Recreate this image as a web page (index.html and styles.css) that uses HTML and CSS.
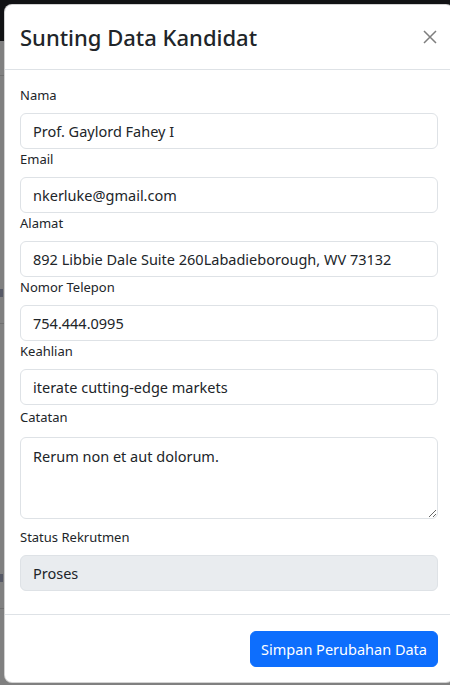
FILE: index.html
```html
<!DOCTYPE html>
<html lang="id">
<head>
<meta charset="utf-8">
<title>Sunting Data Kandidat</title>
<link rel="stylesheet" href="styles.css">
</head>
<body>
<div class="page">
  <div class="topbar"></div>
  <div class="page-row r1"></div>
  <div class="page-row r2"><span class="peek"></span></div>
  <div class="page-row r3"><span class="peek"></span></div>
</div>
<div class="modal">
  <div class="modal-header">
    <h5 class="modal-title">Sunting Data Kandidat</h5>
    <button class="btn-close" type="button" aria-label="Close">
      <svg width="14" height="14" viewBox="0 0 14 14"><path d="M1 1L13 13M13 1L1 13" stroke="#000" stroke-width="1.5" fill="none"/></svg>
    </button>
  </div>
  <div class="modal-body">
    <label class="form-label">Nama</label>
    <input class="form-control" type="text" value="Prof. Gaylord Fahey I">
    <label class="form-label">Email</label>
    <input class="form-control" type="text" value="nkerluke@gmail.com">
    <label class="form-label">Alamat</label>
    <input class="form-control" type="text" value="892 Libbie Dale Suite 260Labadieborough, WV 73132">
    <label class="form-label">Nomor Telepon</label>
    <input class="form-control" type="text" value="754.444.0995">
    <label class="form-label">Keahlian</label>
    <input class="form-control" type="text" value="iterate cutting-edge markets">
    <label class="form-label label-area">Catatan</label>
    <textarea class="form-control area">Rerum non et aut dolorum.</textarea>
    <label class="form-label">Status Rekrutmen</label>
    <input class="form-control disabled" type="text" value="Proses" disabled>
  </div>
  <div class="modal-footer">
    <button class="btn-primary" type="button">Simpan Perubahan Data</button>
  </div>
</div>
</body>
</html>
```

FILE: styles.css
```css
html, body {
  margin: 0;
  padding: 0;
  width: 450px;
  height: 685px;
  overflow: hidden;
  background: #808080;
  font-family: "Noto Sans", "Open Sans", sans-serif;
  color: #212529;
}
.page {
  display: flex;
  flex-direction: column;
}
.topbar {
  height: 41px;
  background: #111214;
}
.page-row {
  border-bottom: 1px solid #6f6f6f;
  position: relative;
}
.r1 { height: 34px; }
.r2 { height: 247px; }
.r3 { height: 284px; }
.peek {
  position: absolute;
  left: 0;
  bottom: 26px;
  width: 3px;
  height: 8px;
  background: #3a3f55;
  opacity: 0.6;
}
.modal {
  position: absolute;
  left: 4px;
  top: 4px;
  width: 450px;
  background: #fff;
  border: 1px solid rgba(0,0,0,0.175);
  border-radius: 8px;
  box-sizing: border-box;
  display: flex;
  flex-direction: column;
}
.modal-header {
  display: flex;
  align-items: center;
  height: 64px;
  padding: 0 15px;
  border-bottom: 1px solid #dee2e6;
}
.modal-title {
  margin: 0;
  font-size: 22px;
  font-weight: 500;
  line-height: 32px;
  color: #212529;
}
.btn-close {
  margin-left: auto;
  margin-right: -4px;
  width: 24px;
  height: 24px;
  border: 0;
  background: transparent;
  padding: 0;
  opacity: 0.5;
  display: flex;
  align-items: center;
  justify-content: center;
}
.modal-body {
  padding: 15px 15px 23px;
  display: flex;
  flex-direction: column;
}
.form-label {
  font-size: 13px;
  line-height: 20px;
  margin-bottom: 8px;
  color: #212529;
}
.label-area {
  margin-top: 2px;
  margin-bottom: 10px;
}
.form-control {
  box-sizing: border-box;
  width: 418px;
  height: 36px;
  padding: 5px 12px;
  font-family: inherit;
  font-size: 14.5px;
  line-height: 24px;
  color: #212529;
  background: #fff;
  border: 1px solid #dee2e6;
  border-radius: 6px;
  outline: none;
}
.area {
  height: 82px;
  resize: vertical;
  margin-bottom: 8px;
  padding-top: 6px;
}
.disabled {
  background: #e9ecef;
  color: #212529;
  -webkit-text-fill-color: #212529;
  opacity: 1;
}
.modal-footer {
  display: flex;
  justify-content: flex-end;
  padding: 16px 15px 15px;
  border-top: 1px solid #dee2e6;
}
.btn-primary {
  height: 36px;
  padding: 0 10px;
  font-family: inherit;
  font-size: 14.5px;
  color: #fff;
  background: #0d6efd;
  border: 1px solid #0d6efd;
  border-radius: 6px;
}
```
